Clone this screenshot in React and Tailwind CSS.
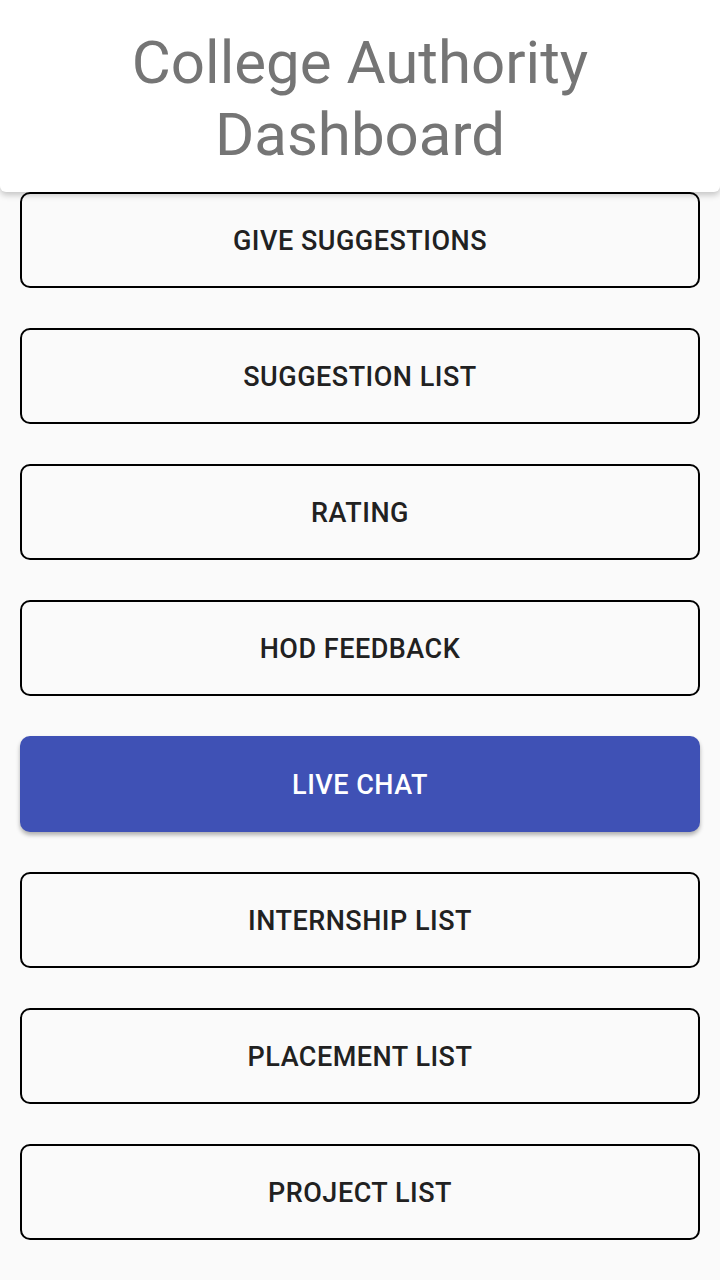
import React from 'react';

const items = [
    'GIVE SUGGESTIONS',
    'SUGGESTION LIST',
    'RATING',
    'HOD FEEDBACK',
    'LIVE CHAT',
    'INTERNSHIP LIST',
    'PLACEMENT LIST',
    'PROJECT LIST',
];

const App = () => {
    return (
        <div className="min-h-screen bg-[#fafafa] font-['Roboto',sans-serif]">
            {/* Cabecera */}
            <div className="relative z-10 h-[192px] pt-[5px] bg-white rounded-b-[6px] shadow-[0_3px_6px_rgba(0,0,0,0.22)] flex items-center justify-center">
                <h1 className="text-center text-[60px] leading-[72px] text-[#757575] font-normal">
                    College Authority<br />Dashboard
                </h1>
            </div>

            {/* Botones */}
            <div className="flex flex-col gap-[40px] px-[20px] pb-[40px]">
                {items.map(label => {
                    const active = label === 'LIVE CHAT';
                    return (
                        <button
                            key={label}
                            className={
                                active
                                    ? 'h-[96px] w-full pt-[2px] rounded-[10px] bg-[#3f51b5] text-white text-[27px] tracking-[0.5px] font-medium shadow-[0_3px_4px_rgba(0,0,0,0.3)]'
                                    : 'h-[96px] w-full pt-[2px] rounded-[10px] border-2 border-black bg-[#fafafa] text-[#212121] text-[27px] tracking-[0.5px] font-medium'
                            }
                        >
                            {label}
                        </button>
                    );
                })}
            </div>
        </div>
    );
};

export default App;
